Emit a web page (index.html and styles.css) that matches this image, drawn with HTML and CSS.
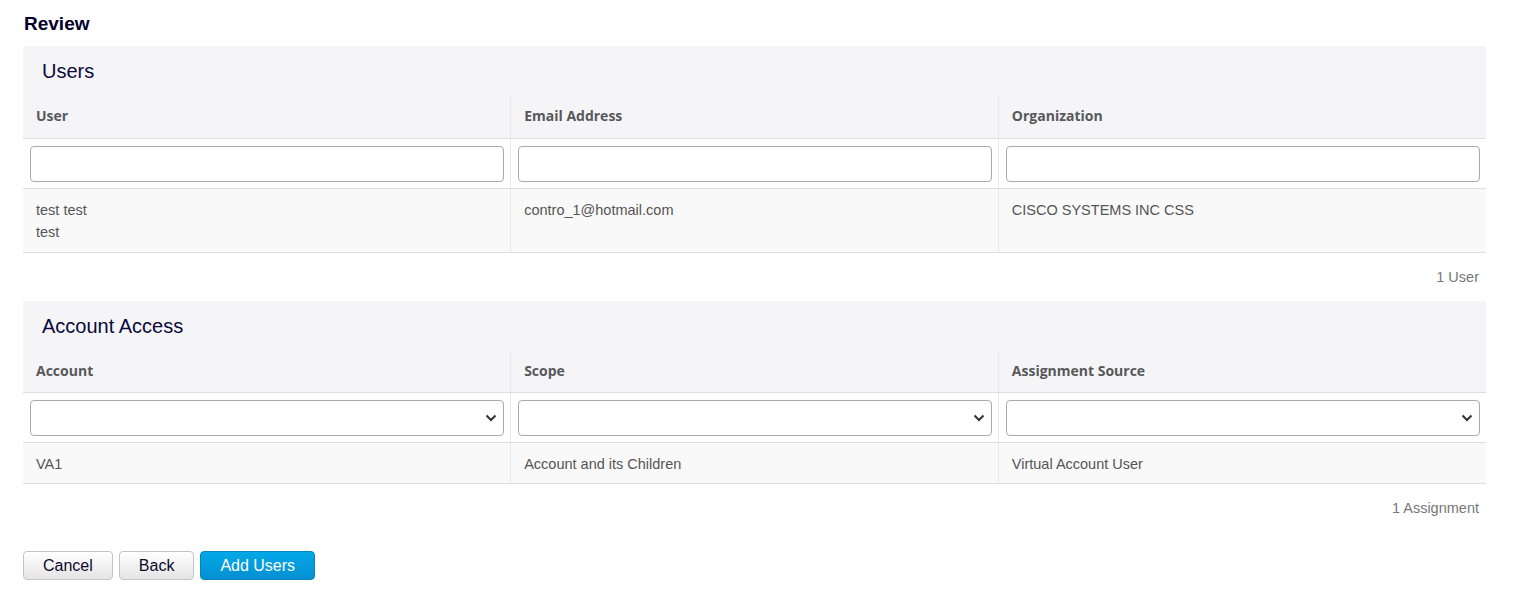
FILE: index.html
```html
<!DOCTYPE html>
<html lang="en">
<head>
    <meta charset="UTF-8">
    <title>Review</title>
    <link rel="stylesheet" href="styles.css">
</head>
<body>
    <div class="page">
        <h1 class="page-title">Review</h1>

        <div class="panel">
            <h2 class="panel-title">Users</h2>
            <table class="grid">
                <thead>
                    <tr class="head-row">
                        <th>User</th>
                        <th>Email Address</th>
                        <th>Organization</th>
                    </tr>
                    <tr class="filter-row">
                        <td><input class="field" type="text"></td>
                        <td><input class="field" type="text"></td>
                        <td><input class="field" type="text"></td>
                    </tr>
                </thead>
                <tbody>
                    <tr class="data-row tall">
                        <td>test test<br>test</td>
                        <td>contro_1@hotmail.com</td>
                        <td>CISCO SYSTEMS INC CSS</td>
                    </tr>
                </tbody>
            </table>
        </div>
        <div class="count">1 User</div>

        <div class="panel">
            <h2 class="panel-title">Account Access</h2>
            <table class="grid">
                <thead>
                    <tr class="head-row">
                        <th>Account</th>
                        <th>Scope</th>
                        <th>Assignment Source</th>
                    </tr>
                    <tr class="filter-row">
                        <td>
                            <div class="select-wrap">
                                <select class="field"></select>
                                <svg class="chevron" width="12" height="8" viewBox="0 0 12 8"><path d="M1.5 1.5 L6 6 L10.5 1.5" fill="none" stroke="#333" stroke-width="2"/></svg>
                            </div>
                        </td>
                        <td>
                            <div class="select-wrap">
                                <select class="field"></select>
                                <svg class="chevron" width="12" height="8" viewBox="0 0 12 8"><path d="M1.5 1.5 L6 6 L10.5 1.5" fill="none" stroke="#333" stroke-width="2"/></svg>
                            </div>
                        </td>
                        <td>
                            <div class="select-wrap">
                                <select class="field"></select>
                                <svg class="chevron" width="12" height="8" viewBox="0 0 12 8"><path d="M1.5 1.5 L6 6 L10.5 1.5" fill="none" stroke="#333" stroke-width="2"/></svg>
                            </div>
                        </td>
                    </tr>
                </thead>
                <tbody>
                    <tr class="data-row">
                        <td>VA1</td>
                        <td>Account and its Children</td>
                        <td>Virtual Account User</td>
                    </tr>
                </tbody>
            </table>
        </div>
        <div class="count">1 Assignment</div>

        <div class="actions">
            <button class="btn">Cancel</button>
            <button class="btn">Back</button>
            <button class="btn btn-primary">Add Users</button>
        </div>
    </div>
</body>
</html>
```

FILE: styles.css
```css
*{
    box-sizing: border-box;
}
body{
    margin: 0;
    font-family: "Liberation Sans", Arial, sans-serif;
    font-size: 14px;
    color: #555;
    background: #fff;
}
.page{
    padding: 13px 30px 0 23px;
}
.page-title{
    margin: 0 0 11px 1px;
    font-size: 19px;
    line-height: 22px;
    font-weight: bold;
    color: #00002b;
}
.panel{
    background-color: #f5f5f7;
}
.panel-title{
    margin: 0;
    padding: 13px 19px 13px;
    font-size: 20px;
    line-height: 24px;
    font-weight: normal;
    color: #0a0a3c;
}
.grid{
    width: 100%;
    border-collapse: collapse;
    table-layout: fixed;
}
.grid th,
.grid td{
    border-left: 1px solid #e8e8ea;
    text-align: left;
    vertical-align: top;
}
.grid th:first-child,
.grid td:first-child{
    border-left: 0;
}
.head-row th{
    height: 42px;
    padding: 10px 13px 11px;
    font-family: "Open Sans", "Liberation Sans", sans-serif;
    font-size: 14px;
    line-height: 20px;
    font-weight: bold;
    color: #58585b;
    border-bottom: 1px solid #dedede;
}
.filter-row td{
    background-color: #fff;
    padding: 7px 6px 6px 7px;
    border-bottom: 1px solid #dedede;
}
.field{
    display: block;
    width: 100%;
    height: 36px;
    margin: 0;
    border: 1px solid #aaa;
    border-radius: 4px;
    background: #fff;
    font-family: inherit;
    font-size: 14px;
    padding: 0 8px;
    -webkit-appearance: none;
    appearance: none;
    outline: none;
}
.select-wrap{
    position: relative;
}
.chevron{
    position: absolute;
    right: 7px;
    top: 14px;
}
.data-row td{
    background-color: #f9f9f9;
    padding: 10px 13px 8px;
    font-size: 14.5px;
    line-height: 22px;
    color: #555;
    border-bottom: 1px solid #dedede;
}
.data-row.tall td{
    padding-bottom: 9px;
    height: 64px;
}
.count{
    padding: 14px 7px 14px;
    font-size: 14.5px;
    line-height: 20px;
    text-align: right;
    color: #777;
}
.actions{
    display: flex;
    gap: 6px;
    margin-top: 19px;
}
.btn{
    height: 29px;
    padding: 0 19px;
    border: 1px solid #c4c4c4;
    border-radius: 4px;
    background: linear-gradient(#ffffff, #e4e4e4);
    font-family: "Liberation Sans", Arial, sans-serif;
    font-size: 16px;
    color: #0a0a2e;
    cursor: pointer;
}
.btn-primary{
    border-color: #0b82c0;
    background: linear-gradient(#04a8e6, #0490d3);
    color: #fff;
}
```
